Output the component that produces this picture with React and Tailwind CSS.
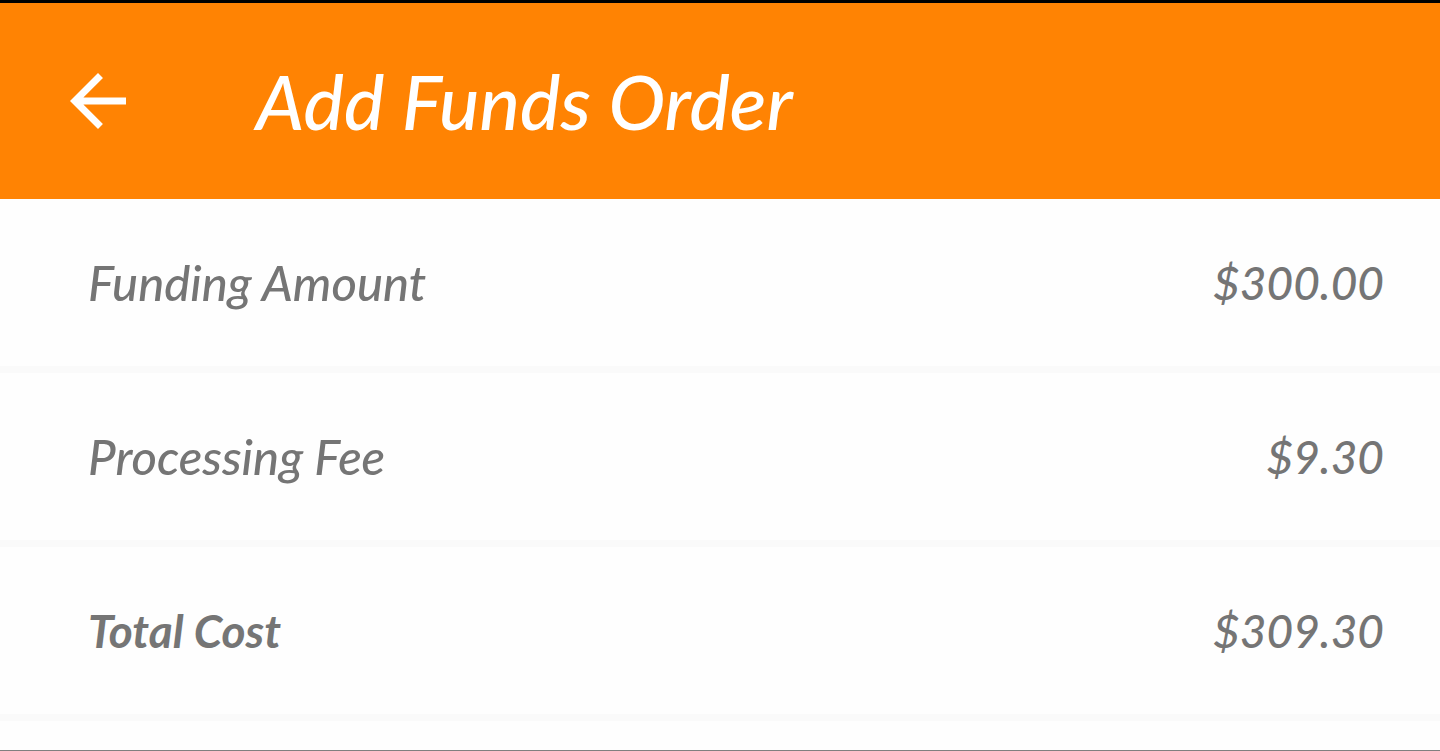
import clsx from "clsx";

const rows = [
  { label: "Funding Amount", value: "$300.00" },
  { label: "Processing Fee", value: "$9.30" },
  { label: "Total Cost", value: "$309.30", bold: true },
];

const BackIcon = () => (
  <svg viewBox="0 0 24 24" className="size-[84px]" fill="currentColor" aria-hidden="true">
    <path d="M20 11H7.83l5.59-5.59L12 4l-8 8 8 8 1.41-1.41L7.83 13H20v-2z" />
  </svg>
);

const Header = ({ title }) => (
  <header className="flex h-[199px] items-center border-t-3 border-black bg-[#ff8303] pl-14 text-white">
    <button type="button" aria-label="Back" className="shrink-0">
      <BackIcon />
    </button>
    <h1 className="ml-29 text-[76px] leading-20 font-medium whitespace-nowrap italic">{title}</h1>
  </header>
);

const OrderRow = ({ label, value, bold }) => (
  <div className="flex items-center justify-between border-b-7 border-[#fafafa] py-14 pr-14 pl-22 leading-[55px] text-[#757575] italic">
    <dt className={clsx(bold ? "text-[46px] font-bold" : "text-[49px] font-medium")}>{label}</dt>
    <dd className="text-[46px] font-medium">{value}</dd>
  </div>
);

export default function App() {
  return (
    <div className="min-h-screen border-b border-[#808080] bg-[#fefefe] font-['Lato',sans-serif]">
      <Header title="Add Funds Order" />
      <dl>
        {rows.map((row) => (
          <OrderRow key={row.label} {...row} />
        ))}
      </dl>
    </div>
  );
}
